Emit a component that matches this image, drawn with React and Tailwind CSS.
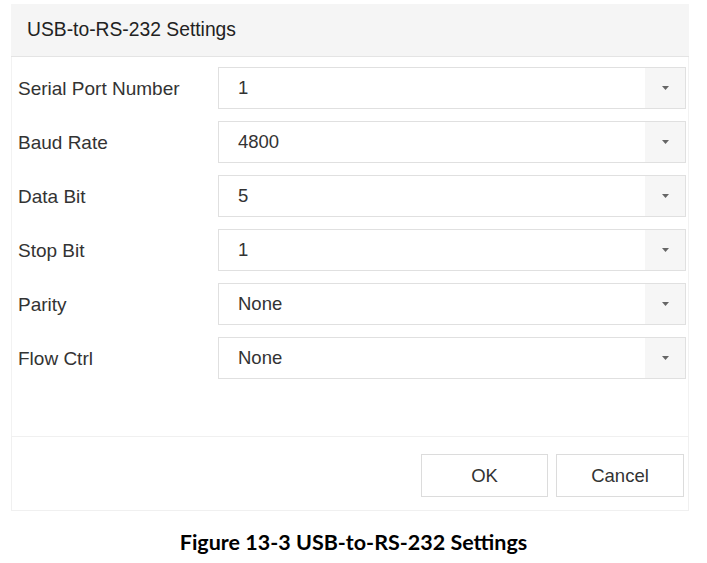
import React from "react";

const fields = [
    { label: "Serial Port Number", value: "1" },
    { label: "Baud Rate", value: "4800" },
    { label: "Data Bit", value: "5" },
    { label: "Stop Bit", value: "1" },
    { label: "Parity", value: "None" },
    { label: "Flow Ctrl", value: "None" },
];

const SelectBox = ({ value }) => (
    <div className="flex h-[42px] w-[468px] items-stretch border border-[#e0e0e0] bg-white">
        <div className="flex flex-1 items-center pl-[19px] text-[18.5px] text-[#333]">{value}</div>
        <div className="flex w-[40px] items-center justify-center bg-[#f6f6f6]">
            <svg width="7" height="4" viewBox="0 0 7 4">
                <path d="M0 0 L7 0 L3.5 4 Z" fill="#666" />
            </svg>
        </div>
    </div>
);

export default function App() {
    return (
        <div className="bg-white pt-[4px] w-[707px] h-[563px]" style={{ fontFamily: '"Liberation Sans", Arial, sans-serif' }}>
            <div className="ml-[11px] w-[678px]">
                <div className="flex h-[53px] items-center border-b border-[#e4e4e4] bg-[#f5f5f5] pl-[16px] text-[19.3px] text-[#222]">
                    USB-to-RS-232 Settings
                </div>
                <div className="border-x border-[#f2f2f2] pt-[10px] pb-[57px] pr-[2px]">
                    <div className="flex flex-col gap-[12px]">
                        {fields.map((f) => (
                            <div key={f.label} className="flex items-center">
                                <div className="w-[206px] pl-[6px] pt-[3px] text-[19px] text-[#333]">{f.label}</div>
                                <SelectBox value={f.value} />
                            </div>
                        ))}
                    </div>
                </div>
                <div className="flex justify-end gap-[8px] border border-[#f0f0f0] pt-[17px] pb-[13px] pr-[4px]">
                    <button className="h-[43px] w-[127px] border border-[#dcdcdc] bg-white text-[18.5px] text-[#333]">OK</button>
                    <button className="h-[43px] w-[128px] border border-[#dcdcdc] bg-white text-[18.5px] text-[#333]">Cancel</button>
                </div>
            </div>
            <div className="mt-[15px] text-center text-[21.5px] font-bold text-black" style={{ fontFamily: 'Lato, "Open Sans", sans-serif' }}>
                Figure 13-3 USB-to-RS-232 Settings
            </div>
        </div>
    );
}
